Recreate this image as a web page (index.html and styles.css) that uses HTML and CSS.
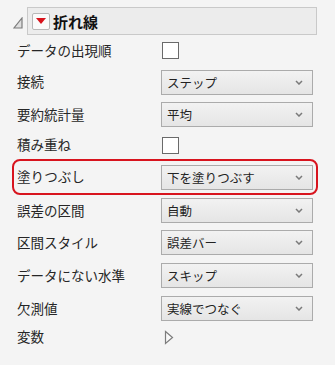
FILE: index.html
```html
<!DOCTYPE html>
<html lang="ja">
<head>
    <meta charset="UTF-8">
    <title>折れ線</title>
    <link rel="stylesheet" href="styles.css">
</head>
<body>
    <div id="panel">
        <!-- outline header -->
        <div class="head">
            <svg class="corner" width="10" height="12" viewBox="0 0 10 12">
                <polygon points="9,1 9,11 1,11" fill="#dedede" stroke="#7c7c7c" stroke-width="1.2"/>
            </svg>
            <div class="head-bar">
                <span class="menu-btn">
                    <svg width="10" height="6" viewBox="0 0 10 6"><polygon points="0,0 10,0 5,6" fill="#d8121b"/></svg>
                </span>
                <span class="title">折れ線</span>
            </div>
        </div>

        <div class="row r31">
            <span class="label">データの出現順</span>
            <span class="check"></span>
        </div>
        <div class="row r32">
            <span class="label">接続</span>
            <span class="combo">ステップ<svg class="chev" width="8" height="5" viewBox="0 0 8 5"><polyline points="1,1 4,4 7,1" fill="none" stroke="#7a7a7a" stroke-width="1.5"/></svg></span>
        </div>
        <div class="row r33">
            <span class="label">要約統計量</span>
            <span class="combo">平均<svg class="chev" width="8" height="5" viewBox="0 0 8 5"><polyline points="1,1 4,4 7,1" fill="none" stroke="#7a7a7a" stroke-width="1.5"/></svg></span>
        </div>
        <div class="row r28">
            <span class="label">積み重ね</span>
            <span class="check"></span>
        </div>
        <div class="row marked">
            <span class="label">塗りつぶし</span>
            <span class="combo">下を塗りつぶす<svg class="chev" width="8" height="5" viewBox="0 0 8 5"><polyline points="1,1 4,4 7,1" fill="none" stroke="#7a7a7a" stroke-width="1.5"/></svg></span>
        </div>
        <div class="row r31">
            <span class="label">誤差の区間</span>
            <span class="combo">自動<svg class="chev" width="8" height="5" viewBox="0 0 8 5"><polyline points="1,1 4,4 7,1" fill="none" stroke="#7a7a7a" stroke-width="1.5"/></svg></span>
        </div>
        <div class="row r33">
            <span class="label">区間スタイル</span>
            <span class="combo">誤差バー<svg class="chev" width="8" height="5" viewBox="0 0 8 5"><polyline points="1,1 4,4 7,1" fill="none" stroke="#7a7a7a" stroke-width="1.5"/></svg></span>
        </div>
        <div class="row r33">
            <span class="label">データにない水準</span>
            <span class="combo">スキップ<svg class="chev" width="8" height="5" viewBox="0 0 8 5"><polyline points="1,1 4,4 7,1" fill="none" stroke="#7a7a7a" stroke-width="1.5"/></svg></span>
        </div>
        <div class="row r33">
            <span class="label">欠測値</span>
            <span class="combo">実線でつなぐ<svg class="chev" width="8" height="5" viewBox="0 0 8 5"><polyline points="1,1 4,4 7,1" fill="none" stroke="#7a7a7a" stroke-width="1.5"/></svg></span>
        </div>
        <div class="row r23">
            <span class="label">変数</span>
            <svg class="expand" width="10" height="15" viewBox="0 0 10 15">
                <polygon points="1.5,1.5 8.5,7.5 1.5,13.5" fill="#f8f8f8" stroke="#7c7c7c" stroke-width="1.2"/>
            </svg>
        </div>
    </div>
</body>
</html>
```

FILE: styles.css
```css
/* JMP style option panel */
html, body {
    margin: 0;
    padding: 0;
}
body {
    background-color: #f4f4f4;
    font-family: "Noto Sans CJK JP", "Noto Sans", sans-serif;
    color: #262626;
    width: 335px;
    height: 365px;
    overflow: hidden;
}
#panel {
    padding-top: 7px;
    padding-left: 17px;
}
.head {
    display: flex;
    align-items: center;
    margin-left: -4px;
}
.corner {
    margin-top: 3px;
    margin-right: 4px;
}
.head-bar {
    display: flex;
    align-items: center;
    width: 288px;
    height: 26px;
    background-color: #ececec;
    border: 1px solid #c9c9c9;
}
.menu-btn {
    display: flex;
    align-items: center;
    justify-content: center;
    width: 16px;
    height: 15px;
    margin-left: 4px;
    background-color: #fafafa;
    border: 1px solid #b8b8b8;
    border-radius: 2px;
}
.title {
    margin-left: 3px;
    font-size: 15px;
    font-weight: bold;
    color: #111;
    line-height: 1;
}
.row {
    display: flex;
    align-items: center;
    height: 33px;
    box-sizing: border-box;
}
.r31 { height: 31px; }
.r32 { height: 32px; }
.r33 { height: 33px; }
.r28 { height: 28px; }
.r23 { height: 24px; }
.label {
    width: 144px;
    font-size: 13.5px;
    line-height: 1;
    flex-shrink: 0;
}
.check {
    width: 15px;
    height: 15px;
    margin-left: 1px;
    background-color: #fff;
    border: 1px solid #6a6a6a;
}
.combo {
    display: flex;
    align-items: center;
    justify-content: space-between;
    box-sizing: border-box;
    width: 152px;
    height: 25px;
    padding: 0 9px 0 5px;
    font-size: 12.5px;
    color: #222;
    background: linear-gradient(#f2f2f2, #e5e5e5);
    border: 1px solid #ababab;
}
.marked {
    height: 36px;
    width: 306px;
    margin-left: -5px;
    padding-left: 3px;
    border: 2px solid #d8141e;
    border-radius: 8px;
}
.expand {
    margin-left: 3px;
}
```
